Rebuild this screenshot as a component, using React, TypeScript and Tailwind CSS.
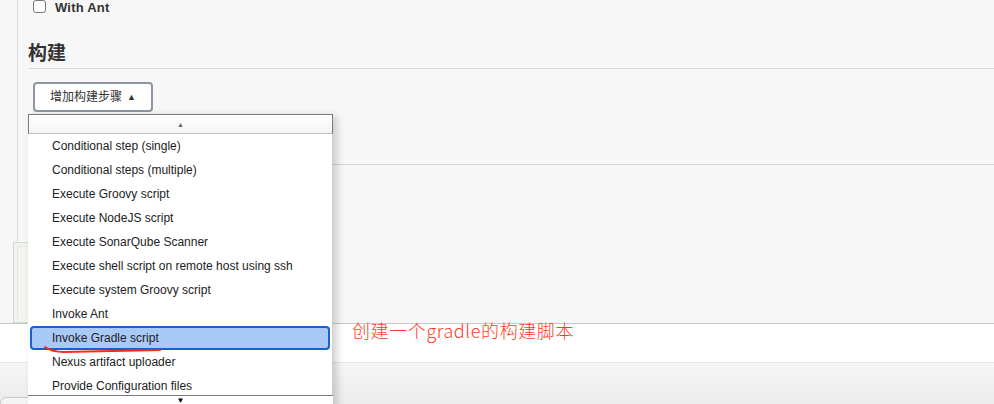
import React from 'react';

const steps = [
  'Conditional step (single)',
  'Conditional steps (multiple)',
  'Execute Groovy script',
  'Execute NodeJS script',
  'Execute SonarQube Scanner',
  'Execute shell script on remote host using ssh',
  'Execute system Groovy script',
  'Invoke Ant',
  'Invoke Gradle script',
  'Nexus artifact uploader',
  'Provide Configuration files',
];

const font = { fontFamily: '"Liberation Sans", "Noto Sans CJK SC", sans-serif' };

const App = () => {
  return (
    <div className="relative w-[994px] h-[404px] overflow-hidden bg-[#f7f7f7] text-[#333]" style={font}>
      {/* Build section */}
      <div className="h-[242px] ml-[17px] border-l border-[#dcdcdc] pt-px">
        <div className="h-[13px] flex items-center pl-[15px]">
          <span className="w-[13px] h-[13px] -mt-[3px] rounded-[3px] border border-[#777] bg-white" />
          <span className="ml-[9px] text-[13px] font-semibold text-[#333] leading-[13px] tracking-[0.2px]">With Ant</span>
        </div>
        <div className="ml-[11px] mt-[27px] h-[28px] border-b border-[#d8d8d8] flex items-end pb-[3px]">
          <h2 className="text-[19px] font-bold leading-[22px] -ml-[1px]">构建</h2>
        </div>
        <div className="pl-[15px] pt-[13px]">
          <button className="w-[120px] h-[30px] rounded-[4px] border-2 border-[#8c96a2] bg-white text-[12px] text-[#333] flex items-center justify-center gap-[5px]">
            增加构建步骤
            <span className="text-[9px] leading-none">▲</span>
          </button>
        </div>
        <div className="ml-[11px] mt-[52px] border-b border-[#d4d4d4]" />
      </div>

      {/* Leftover post-build box */}
      <div className="h-[81px] ml-[13px] w-[40px] border border-[#cfdccb] bg-[#f2f5ef] p-[3px]">
        <div className="h-full border-l border-t border-[#e1e8dd]" />
      </div>

      {/* White band */}
      <div className="h-[40px] bg-white border-t border-[#c8c8c8] border-b border-b-[#e1e7ec]" />

      {/* Bottom bar */}
      <div className="h-[41px] bg-gradient-to-b from-[#f6f6f6] to-[#ececec] pt-[34px]">
        <div className="w-[173px] h-[10px] rounded-t-[6px] border border-[#c9c9c9] bg-[#f4f4f4]" />
      </div>

      {/* Dropdown menu */}
      <div className="absolute left-[28px] top-[114px] w-[305px] h-[300px] bg-white shadow-[4px_2px_8px_rgba(0,0,0,0.18)] text-[12px] text-[#222]">
        <div className="h-[20px] border border-[#7a7a7a] border-b-[#bdbdbd] bg-gradient-to-b from-white to-[#f4f4f4] flex items-center justify-center">
          <span className="text-[7px] text-[#666] leading-none">▲</span>
        </div>
        <div className="h-[261px] overflow-hidden border-r border-[#d0d0d0]">
          {steps.map((s) =>
            s === 'Invoke Gradle script' ? (
              <div
                key={s}
                className="mx-[2px] h-[24px] rounded-[4px] border-2 border-[#1b5fcc] bg-[#a9c9f7] flex items-center pl-[20px]"
              >
                {s}
              </div>
            ) : (
              <div key={s} className="h-[24px] flex items-center pl-[24px]">
                {s}
              </div>
            )
          )}
        </div>
        <div className="h-[20px] border-t border-[#7a7a7a] flex justify-center">
          <span className="text-[8px] text-black leading-none mt-[1px]">▼</span>
        </div>
      </div>

      {/* Red annotation */}
      <svg className="absolute left-[40px] top-[344px]" width="130" height="12" viewBox="0 0 130 12">
        <path d="M5 3 Q12 8 24 8 Q70 7 120 6" fill="none" stroke="#ff2a12" strokeWidth="2" strokeLinecap="round" />
      </svg>
      <div
        className="absolute left-[352px] top-[321px] text-[18px] leading-[18px] font-light tracking-[0.6px] text-[#ff3a24]"
        style={{ fontFamily: '"Noto Sans CJK SC", "Noto Sans", sans-serif' }}
      >
        创建一个gradle的构建脚本
      </div>
    </div>
  );
};

export default App;
